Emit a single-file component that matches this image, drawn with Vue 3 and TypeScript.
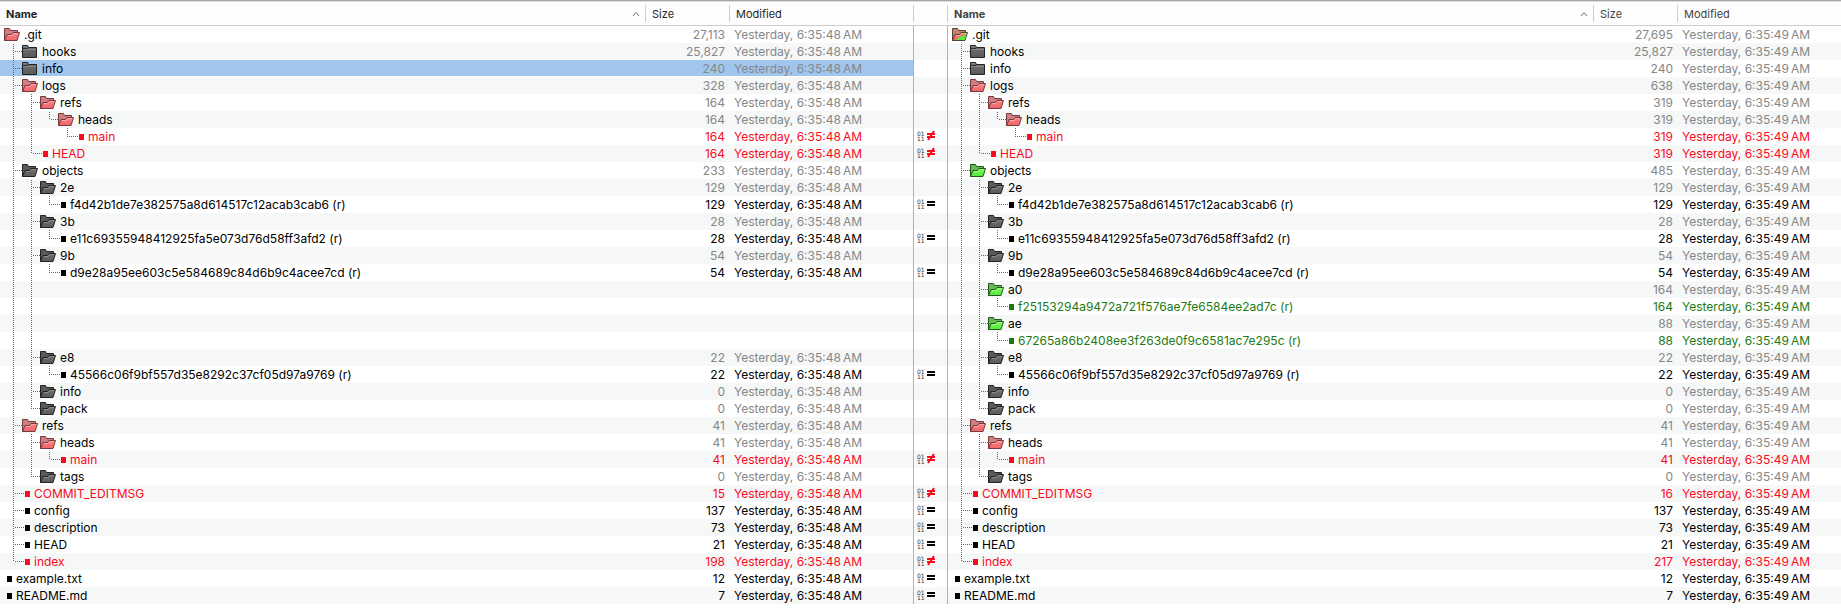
<script setup lang="ts">
type Kind = 'open' | 'closed' | 'file'
type Tone = 'plain' | 'changed' | 'added' | 'mixed'
type Side = 'left' | 'right'
type Guide = 'none' | 'line' | 'tee' | 'elbow'

interface Entry {
  name: string
  level: number
  kind: Kind
  left: string | null
  right: string | null
  leftTone: Tone
  rightTone: Tone
}

function entry(name: string, level: number, kind: Kind, left: string | null, right: string | null, leftTone: Tone = 'plain', rightTone: Tone = leftTone): Entry {
  return { name, level, kind, left, right, leftTone, rightTone }
}

const entries: Entry[] = [
  entry('.git', 0, 'open', '27,113', '27,695', 'changed', 'mixed'),
  entry('hooks', 1, 'closed', '25,827', '25,827'),
  entry('info', 1, 'closed', '240', '240'),
  entry('logs', 1, 'open', '328', '638', 'changed'),
  entry('refs', 2, 'open', '164', '319', 'changed'),
  entry('heads', 3, 'open', '164', '319', 'changed'),
  entry('main', 4, 'file', '164', '319', 'changed'),
  entry('HEAD', 2, 'file', '164', '319', 'changed'),
  entry('objects', 1, 'open', '233', '485', 'plain', 'added'),
  entry('2e', 2, 'open', '129', '129'),
  entry('f4d42b1de7e382575a8d614517c12acab3cab6 (r)', 3, 'file', '129', '129'),
  entry('3b', 2, 'open', '28', '28'),
  entry('e11c69355948412925fa5e073d76d58ff3afd2 (r)', 3, 'file', '28', '28'),
  entry('9b', 2, 'open', '54', '54'),
  entry('d9e28a95ee603c5e584689c84d6b9c4acee7cd (r)', 3, 'file', '54', '54'),
  entry('a0', 2, 'open', null, '164', 'added'),
  entry('f25153294a9472a721f576ae7fe6584ee2ad7c (r)', 3, 'file', null, '164', 'added'),
  entry('ae', 2, 'open', null, '88', 'added'),
  entry('67265a86b2408ee3f263de0f9c6581ac7e295c (r)', 3, 'file', null, '88', 'added'),
  entry('e8', 2, 'open', '22', '22'),
  entry('45566c06f9bf557d35e8292c37cf05d97a9769 (r)', 3, 'file', '22', '22'),
  entry('info', 2, 'open', '0', '0'),
  entry('pack', 2, 'open', '0', '0'),
  entry('refs', 1, 'open', '41', '41', 'changed'),
  entry('heads', 2, 'open', '41', '41', 'changed'),
  entry('main', 3, 'file', '41', '41', 'changed'),
  entry('tags', 2, 'open', '0', '0'),
  entry('COMMIT_EDITMSG', 1, 'file', '15', '16', 'changed'),
  entry('config', 1, 'file', '137', '137'),
  entry('description', 1, 'file', '73', '73'),
  entry('HEAD', 1, 'file', '21', '21'),
  entry('index', 1, 'file', '198', '217', 'changed'),
  entry('example.txt', 0, 'file', '12', '12'),
  entry('README.md', 0, 'file', '7', '7'),
]

const palette: Record<Tone, { back: string; front: string; shade: string; edge: string; glow: string }> = {
  plain: { back: '#5a5a5a', front: '#727272', shade: '#595959', edge: '#222222', glow: '#8c8c8c' },
  changed: { back: '#cf7f80', front: '#fb8285', shade: '#ee6468', edge: '#743a3c', glow: '#ffa6a8' },
  added: { back: '#62bd50', front: '#78f95c', shade: '#55e83c', edge: '#24551c', glow: '#9dff84' },
  mixed: { back: '#c97f75', front: '#f9797c', shade: '#f0696c', edge: '#54452c', glow: '#ffa6a8' },
}

const panes = [
  { side: 'left' as Side, title: 'Left folder', time: 'Yesterday, 6:35:48\u202fAM', selected: 2 },
  { side: 'right' as Side, title: 'Right folder', time: 'Yesterday, 6:35:49\u202fAM', selected: -1 },
]

function continues(index: number, level: number): boolean {
  for (let i = index + 1; i < entries.length; i++) {
    if (entries[i].level < level) return false
    if (entries[i].level === level) return true
  }
  return false
}

function guides(index: number, present: boolean): Guide[] {
  const depth = present ? entries[index].level : 2
  return Array.from({ length: depth }, (_, k): Guide => {
    const more = continues(index, k + 1)
    if (present && k === depth - 1) return more ? 'tee' : 'elbow'
    return more ? 'line' : 'none'
  })
}

const rows = panes.map((pane) => ({
  ...pane,
  items: entries.map((e, i) => {
    const size = pane.side === 'left' ? e.left : e.right
    const tone = pane.side === 'left' ? e.leftTone : e.rightTone
    return { ...e, size, tone, present: size !== null, guides: guides(i, size !== null) }
  }),
}))

const marks = entries.map((e) => (e.kind !== 'file' || e.left === null ? '' : e.leftTone === 'changed' ? 'differs' : 'equal'))
</script>

<template>
  <main class="compare">
    <template v-for="pane in rows" :key="pane.side">
      <section :class="['pane', pane.side]">
        <table :aria-label="pane.title">
          <thead>
            <tr>
              <th class="name" aria-sort="ascending">
                <button type="button" class="sort">
                  Name
                  <svg width="8" height="6" viewBox="0 0 8 6" aria-hidden="true"><path d="M1 5 4 1.5 7 5" fill="none" stroke="#6e6e6e" /></svg>
                </button>
              </th>
              <th class="size"><button type="button">Size</button></th>
              <th class="modified"><button type="button">Modified</button></th>
            </tr>
          </thead>
          <tbody>
            <tr v-for="(row, i) in pane.items" :key="i" :class="[row.kind, row.tone, { selected: i === pane.selected }]">
              <td>
                <div class="node">
                  <svg v-for="(g, k) in row.guides" :key="k" class="guide" width="18" height="17" viewBox="0 0 18 17" aria-hidden="true">
                    <line v-if="g !== 'none'" x1="9.5" x2="9.5" :y1="i % 2" :y2="g === 'elbow' ? 9 : 17" />
                    <line v-if="g === 'tee' || g === 'elbow'" x1="11" x2="18" y1="8.5" y2="8.5" />
                  </svg>
                  <template v-if="row.present">
                    <svg v-if="row.kind === 'file'" class="bullet" width="12" height="17" viewBox="0 0 12 17" aria-hidden="true">
                      <line v-if="row.level > 0" x1="1" x2="3" y1="8.5" y2="8.5" />
                      <rect x="3" y="6" width="5" height="6" fill="currentColor" />
                    </svg>
                    <svg v-else class="folder" width="20" height="17" viewBox="0 0 20 17" aria-hidden="true">
                      <defs>
                        <linearGradient :id="`fill-${pane.side}-${i}`" x1="0" y1="0" x2="0" y2="1">
                          <stop offset="0" :stop-color="palette[row.tone].front" />
                          <stop offset="1" :stop-color="palette[row.tone].shade" />
                        </linearGradient>
                      </defs>
                      <template v-if="row.kind === 'open'">
                        <path d="M.5 14.5V2.5H5.5L6.5 4.5H13.5V8L12 14.5Z" :fill="palette[row.tone].back" :stroke="palette[row.tone].edge" />
                        <path d="M.5 14.5 3 8.5H7.5L9 6.5H15.5L13 14.5Z" :fill="`url(#fill-${pane.side}-${i})`" :stroke="palette[row.tone].edge" />
                        <path d="M4 9.5H8L9.5 7.5H14" fill="none" :stroke="palette[row.tone].glow" />
                        <path v-if="row.tone === 'mixed'" d="M3.5 14 14.8 7 12.7 14Z" fill="#58ea3c" />
                      </template>
                      <template v-else>
                        <path d="M.5 14.5V2.5H5.5L6.5 4.5H14.5V14.5Z" :fill="`url(#fill-${pane.side}-${i})`" stroke="#222222" />
                        <path d="M1 3.5H5M1 6.5H14" stroke="#888888" />
                        <path d="M1 5.5H6L7 4.5" fill="none" stroke="#333333" />
                      </template>
                    </svg>
                    <span>{{ row.name }}</span>
                  </template>
                </div>
              </td>
              <td class="size">{{ row.size ?? '' }}</td>
              <td class="modified">{{ row.present ? pane.time : '' }}</td>
            </tr>
          </tbody>
        </table>
      </section>
      <table v-if="pane.side === 'left'" class="status" aria-label="Comparison result">
        <thead>
          <tr><th><div class="gap"></div></th></tr>
        </thead>
        <tbody>
          <tr v-for="(mark, i) in marks" :key="i">
            <td>
              <div v-if="mark" class="mark">
                <span class="bits">01<br />11</span>
                <svg width="11" height="17" viewBox="0 0 11 17" role="img" :aria-label="mark">
                  <path d="M0 4H10V11H0Z" fill="#fff" />
                  <path v-if="mark === 'equal'" d="M1 5H9V7H1ZM1 8H9V10H1Z" fill="#000" />
                  <template v-else>
                    <path d="M1 5H9V7H1ZM1 8H9V10H1Z" fill="#f90a1c" />
                    <path d="M2 12 8 3" stroke="#f90a1c" stroke-width="2" />
                  </template>
                </svg>
              </div>
            </td>
          </tr>
        </tbody>
      </table>
    </template>
  </main>
</template>

<style>
body {
  margin: 0;
  background: #fff;
}
</style>

<style scoped>
.compare {
  display: flex;
  align-items: flex-start;
  border-top: 1px solid #a6a6a6;
  font-family: Inter, Roboto, "Liberation Sans", sans-serif;
  font-size: 12px;
  color: #000;
}
.pane {
  min-width: 0;
}
.pane.left {
  flex: 1 1 268px;
}
.pane.right {
  flex: 1 1 248px;
}
table {
  width: 100%;
  table-layout: fixed;
  border-collapse: separate;
  border-spacing: 0;
}
table.status {
  flex: none;
  width: 35px;
}
th {
  height: 24px;
  padding: 0;
  border-bottom: 1px solid #cdcdcd;
  background: linear-gradient(#dcdcdc 1px, #fdfdfd 1px);
  font-weight: 400;
  text-align: left;
}
th.size {
  width: 84px;
}
.left th.modified {
  width: 184px;
}
.right th.modified {
  width: 164px;
}
th button {
  display: block;
  box-sizing: border-box;
  width: 100%;
  height: 17px;
  margin: 0;
  padding: 2px 6px 0;
  border: 0;
  border-left: 1px solid #cdcdcd;
  background: none;
  font: 11px/15px Inter, Roboto, "Liberation Sans", sans-serif;
  color: #262626;
  text-align: left;
}
th button.sort {
  display: flex;
  align-items: center;
  justify-content: space-between;
  padding: 2px 5px 0 6px;
  border-left: 0;
  font-weight: 700;
}
.right th button {
  color: #444;
}
td {
  height: 17px;
  padding: 0;
  line-height: 17px;
  white-space: nowrap;
  overflow: hidden;
}
tbody tr:nth-child(even) {
  background: #f6f8f8;
}
tbody tr.selected {
  background: linear-gradient(#a0c6ee 16px, #fff 16px);
}
.node {
  display: flex;
  height: 17px;
  padding-left: 4px;
}
.node svg {
  flex: none;
}
.guide line,
.bullet line {
  stroke: #666;
  stroke-dasharray: 1 1;
  shape-rendering: crispEdges;
}
td.size {
  padding-right: 4px;
  text-align: right;
}
td.modified {
  padding-left: 5px;
}
.open .size,
.open .modified,
.closed .size,
.closed .modified {
  color: #868686;
}
.file.changed {
  color: #f90a1c;
}
.file.added {
  color: #1c7a14;
}
.status td {
  border-left: 1px solid #b2b2b2;
  border-right: 1px solid #b2b2b2;
}
.gap {
  height: 17px;
  border-left: 1px solid #cdcdcd;
  border-right: 1px solid #cdcdcd;
}
.mark {
  display: flex;
  height: 17px;
  padding-left: 3px;
  gap: 1px;
}
.bits {
  width: 8px;
  padding-top: 3px;
  font: 6px/5px "DejaVu Sans", sans-serif;
  color: #333;
}
</style>
